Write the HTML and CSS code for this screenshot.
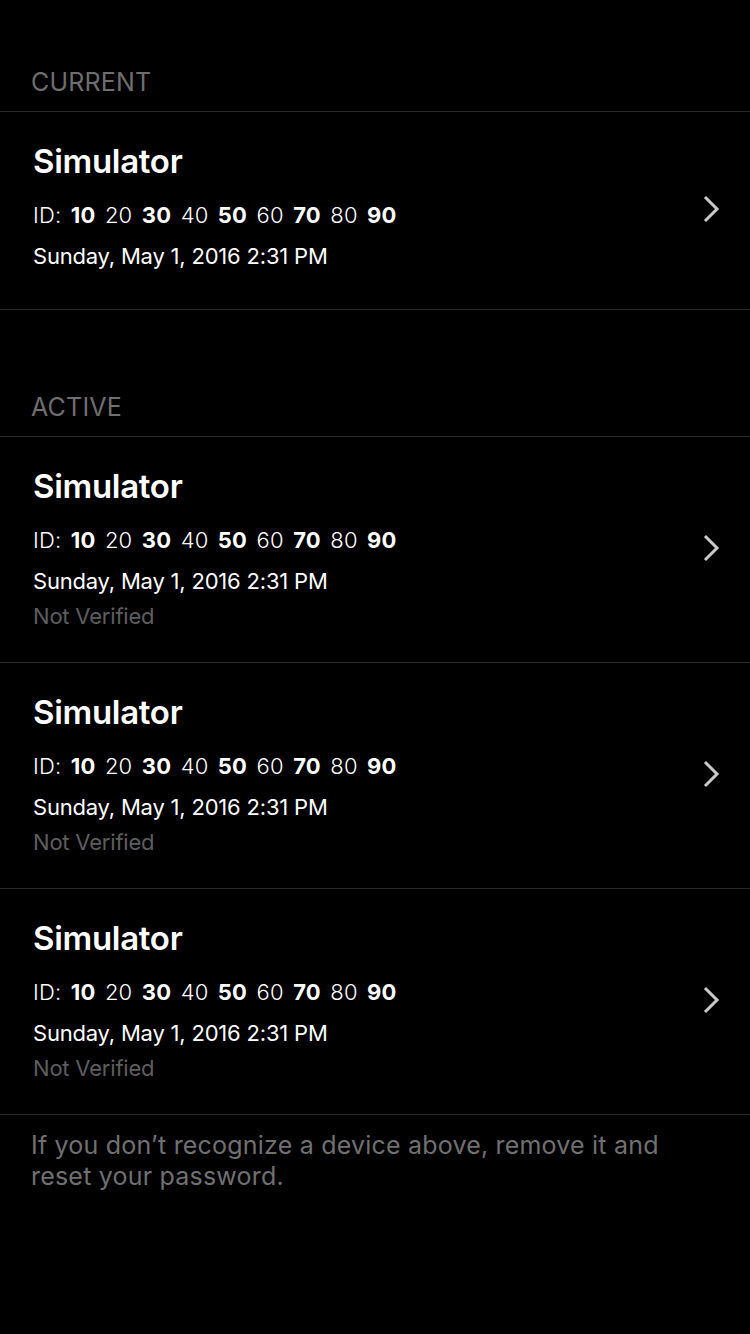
FILE: index.html
```html
<!DOCTYPE html>
<html>
<head>
<meta charset="utf-8">
<link rel="stylesheet" href="styles.css">
</head>
<body>
<div class="page">
  <section class="section">
    <div class="section-header">CURRENT</div>
    <div class="cell">
      <div class="cell-body">
        <div class="title">Simulator</div>
        <div class="line id">ID: <b>10</b> 20 <b>30</b> 40 <b>50</b> 60 <b>70</b> 80 <b>90</b></div>
        <div class="line">Sunday, May 1, 2016 2:31 PM</div>
      </div>
      <svg class="chevron" width="18" height="28" viewBox="0 0 18 28"><path d="M3 2 L15 14 L3 26" fill="none" stroke="#c9c9c9" stroke-width="3"/></svg>
    </div>
  </section>
  <section class="section">
    <div class="section-header">ACTIVE</div>
    <div class="cell">
      <div class="cell-body">
        <div class="title">Simulator</div>
        <div class="line id">ID: <b>10</b> 20 <b>30</b> 40 <b>50</b> 60 <b>70</b> 80 <b>90</b></div>
        <div class="line">Sunday, May 1, 2016 2:31 PM</div>
        <div class="status">Not Verified</div>
      </div>
      <svg class="chevron" width="18" height="28" viewBox="0 0 18 28"><path d="M3 2 L15 14 L3 26" fill="none" stroke="#c9c9c9" stroke-width="3"/></svg>
    </div>
    <div class="cell">
      <div class="cell-body">
        <div class="title">Simulator</div>
        <div class="line id">ID: <b>10</b> 20 <b>30</b> 40 <b>50</b> 60 <b>70</b> 80 <b>90</b></div>
        <div class="line">Sunday, May 1, 2016 2:31 PM</div>
        <div class="status">Not Verified</div>
      </div>
      <svg class="chevron" width="18" height="28" viewBox="0 0 18 28"><path d="M3 2 L15 14 L3 26" fill="none" stroke="#c9c9c9" stroke-width="3"/></svg>
    </div>
    <div class="cell">
      <div class="cell-body">
        <div class="title">Simulator</div>
        <div class="line id">ID: <b>10</b> 20 <b>30</b> 40 <b>50</b> 60 <b>70</b> 80 <b>90</b></div>
        <div class="line">Sunday, May 1, 2016 2:31 PM</div>
        <div class="status">Not Verified</div>
      </div>
      <svg class="chevron" width="18" height="28" viewBox="0 0 18 28"><path d="M3 2 L15 14 L3 26" fill="none" stroke="#c9c9c9" stroke-width="3"/></svg>
    </div>
    <div class="section-footer">If you don’t recognize a device above, remove it and reset your password.</div>
  </section>
</div>
</body>
</html>
```
FILE: styles.css
```css
html, body {
  margin: 0;
  padding: 0;
  background: #000;
}
body {
  width: 750px;
  min-height: 1334px;
  font-family: "Inter", "Roboto", sans-serif;
  color: #fff;
}
.page {
  display: flex;
  flex-direction: column;
}
.section {
  display: flex;
  flex-direction: column;
}
.section + .section {
  margin-top: 15px;
}
.section-header {
  height: 112px;
  box-sizing: border-box;
  display: flex;
  align-items: flex-end;
  padding: 0 31px 13px;
  font-size: 25px;
  line-height: 32px;
  color: #6e6e6e;
  letter-spacing: 0.2px;
  border-bottom: 1px solid #282828;
}
.cell {
  display: flex;
  align-items: center;
  padding: 29px 30px 32px 33px;
  border-bottom: 1px solid #282828;
}
.cell-body {
  flex: 1;
  display: flex;
  flex-direction: column;
}
.title {
  font-size: 33px;
  line-height: 40px;
  font-weight: 600;
  letter-spacing: -0.3px;
}
.line {
  font-size: 22px;
  line-height: 41px;
  font-weight: 400;
  letter-spacing: -0.2px;
}
.title + .line {
  margin-top: 14px;
}
.line.id {
  font-weight: 300;
  letter-spacing: 0.2px;
  word-spacing: 3px;
}
.line b {
  font-weight: 700;
}
.status {
  font-size: 22px;
  line-height: 28px;
  color: #5e5e5e;
  letter-spacing: -0.2px;
}
.chevron {
  flex: none;
}
.section-footer {
  padding: 15px 60px 0 31px;
  font-size: 25px;
  line-height: 31px;
  color: #707070;
  letter-spacing: 0.2px;
}
```
